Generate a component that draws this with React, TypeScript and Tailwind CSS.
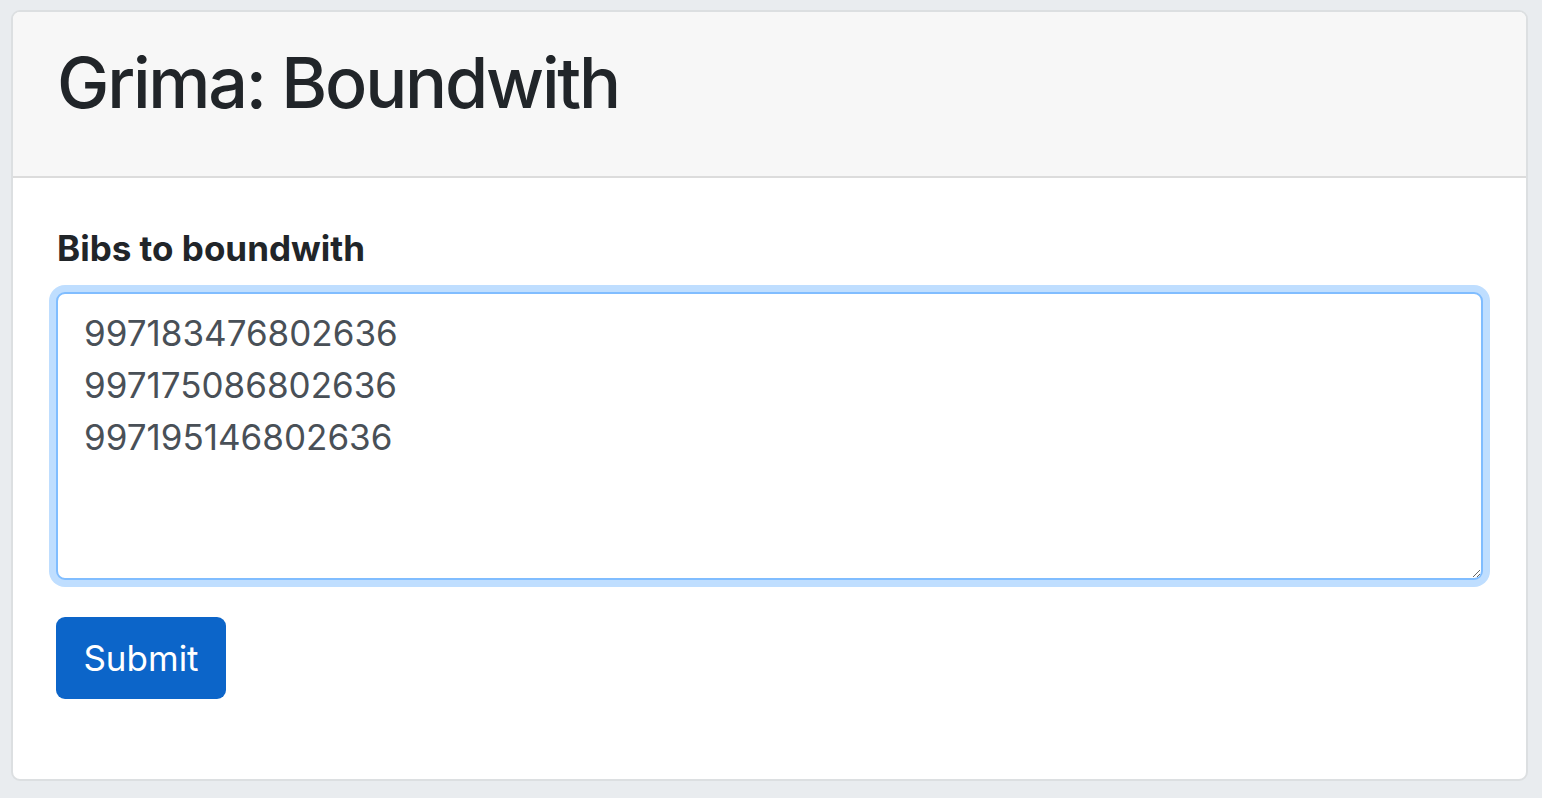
import React from "react";

export default function App() {
  return (
    <div
      className="min-h-[798px] w-full bg-[#e9ecef] pt-[10px] pb-[17px] pl-[11px] pr-[14px]"
      style={{ fontFamily: "Inter, 'Noto Sans', sans-serif" }}
    >
      <div className="flex flex-col rounded-[9px] border-2 border-[#dcdfe1] bg-white overflow-hidden h-[771px]">
        <div className="h-[166px] border-b-2 border-[#dcdcdc] bg-[#f7f7f7] px-[44px] pt-[29px]">
          <h1 className="text-[70px] leading-[84px] font-medium text-[#212529] tracking-[-2.2px]">
            Grima: Boundwith
          </h1>
        </div>
        <div className="flex flex-col px-[43px] pt-[44px]">
          <label className="text-[35px] leading-[52px] font-bold text-[#212529] mb-[18px] pl-[1px]">
            Bibs to boundwith
          </label>
          <textarea
            className="block h-[288px] w-full resize-y rounded-[9px] border-2 border-[#80bdff] bg-white px-[26px] py-[13px] text-[35px] leading-[52px] text-[#495057] outline-none shadow-[0_0_0_7px_#bfdeff]"
            defaultValue={"997183476802636\n997175086802636\n997195146802636"}
          />
          <div className="mt-[37px]">
            <button className="h-[82px] w-[170px] rounded-[9px] bg-[#0c65c9] text-[35px] leading-[52px] text-white">
              Submit
            </button>
          </div>
        </div>
      </div>
    </div>
  );
}
